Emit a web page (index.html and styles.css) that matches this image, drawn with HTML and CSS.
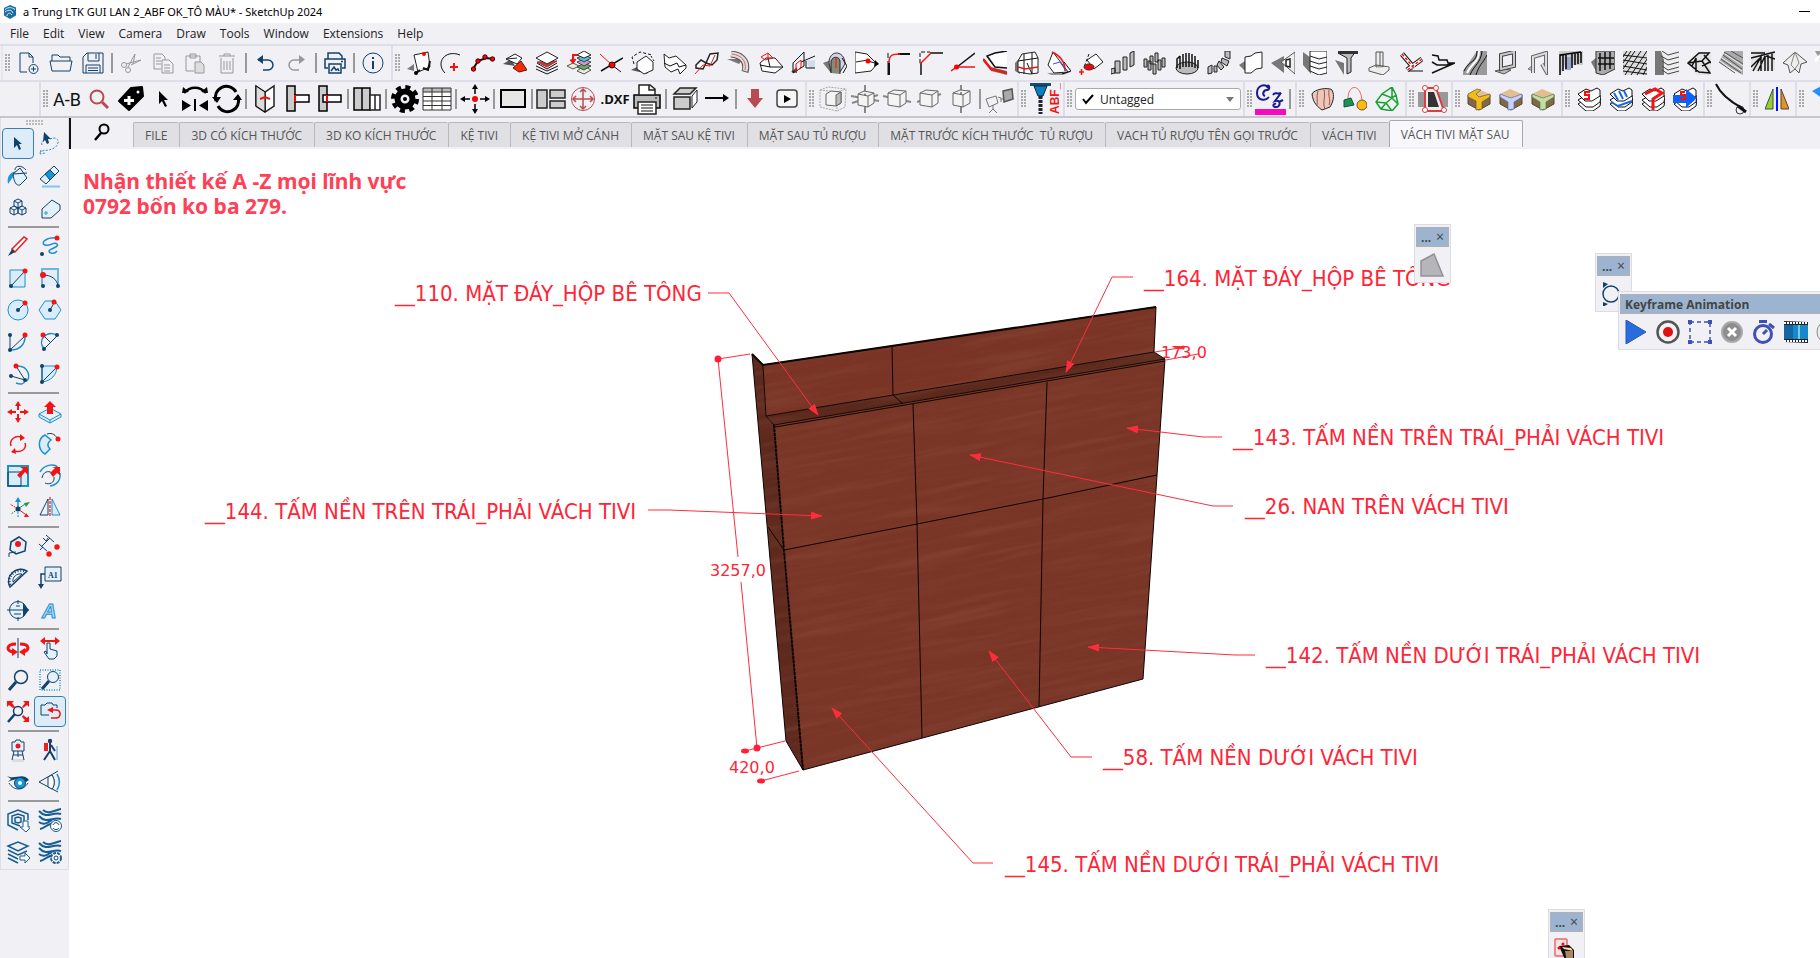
FILE: index.html
```html
<!DOCTYPE html>
<html lang="vi">
<head>
<meta charset="utf-8">
<title>a Trung LTK GUI LAN 2_ABF OK_TÔ MÀU* - SketchUp 2024</title>
<link rel="stylesheet" href="styles.css">
</head>
<body>
<div class="app">
<header class="titlebar">
  <svg class="logo" viewBox="0 0 16 16"><path d="M8 1 14 3.500v8L8 15 2 11.500V4z" fill="#1b6ca0"/><path d="M3 5.500c4-3 7-2 10 0M3 8c4-3 7-2 8 1M5 12c0-3 3-4 5-1" fill="none" stroke="#d8ecf8"/></svg>
  <h1 class="title">a Trung LTK GUI LAN 2_ABF OK_TÔ MÀU* - SketchUp 2024</h1>
  <button class="minimize" aria-label="Minimize"></button>
</header>
<nav class="menubar">
  <button>File</button><button>Edit</button><button>View</button><button>Camera</button><button>Draw</button><button>Tools</button><button>Window</button><button>Extensions</button><button>Help</button>
</nav>

<div class="toolrow">
 <div class="bar first">
  <i class="grip"></i>
  <button class="tb" aria-label="New"><svg viewBox="0 0 24 24"><g class="n"><path d="M10 21H3V2h9l4 4v6M12 2v4h4"/><circle cx="16.500" cy="18" r="4.500"/><path d="M14 18h5M16.500 15.500v5"/></g></svg></button>
  <button class="tb" aria-label="Open"><svg viewBox="0 0 24 24"><g class="n"><path d="M3 10V4h6l2 2h10v4M1 10h22l-2 10H3z"/></g></svg></button>
  <button class="tb" aria-label="Save"><svg viewBox="0 0 24 24"><g class="n"><path d="M2 6 6 2h16v20H2zM7 2v8h11V2M15 3v5M5 22v-8h14v8M7 17h10M7 19.500h10"/></g></svg></button>
  <i class="sep"></i>
  <button class="tb" aria-label="Cut"><svg viewBox="0 0 24 24"><g class="g"><circle cx="5" cy="14" r="2.500"/><circle cx="9" cy="19" r="2.500"/><path d="M7 13 22 9l-10 5M9 16 16 3l-2 10"/></g></svg></button>
  <button class="tb" aria-label="Copy"><svg viewBox="0 0 24 24"><g class="g"><path d="M10 18H3V3h8l3 3v3M11 9h7l4 4v9H11zM5 7h5M5 10h5M5 13h5M13 14h6M13 17h6M13 20h6"/></g></svg></button>
  <button class="tb" aria-label="Paste"><svg viewBox="0 0 24 24"><g class="g"><path d="M11 20H3V5h14v6M7 7V3h6v4z"/><path d="M12 11h6l3 3v8h-9z" fill="#ddd"/></g></svg></button>
  <button class="tb" aria-label="Delete"><svg viewBox="0 0 24 24"><g class="g"><path d="M4 5h16M9 5V3h6v2M6 7v15h12V7M9 10v9M12 10v9M15 10v9"/></g></svg></button>
  <i class="sep"></i>
  <button class="tb" aria-label="Undo"><svg viewBox="0 0 24 24"><path d="M10 19h5a5 5 0 0 0 0-10H5" class="n" stroke-width="1.500"/><path d="M4 8.500 10 4v9z" fill="#12416b"/></svg></button>
  <button class="tb" aria-label="Redo"><svg viewBox="0 0 24 24"><path d="M14 19H9A5 5 0 0 1 9 9h9" class="g" stroke-width="1.500"/><path d="M20 8.500 14 4v9z" fill="#999"/></svg></button>
  <i class="sep"></i>
  <button class="tb" aria-label="Print"><svg viewBox="0 0 24 24"><g class="n" stroke-width="1.500"><path d="M5 8V2h11l3 3v3M5 17H2V8h20v9h-3M6 13h12v9H6z"/><path d="m8 20 3-4 2 3 2-1 1 2M18 10.500h2"/></g></svg></button>
  <i class="sep"></i>
  <button class="tb" aria-label="Model info"><svg viewBox="0 0 24 24"><circle class="n" cx="12" cy="12" r="10"/><path d="M12 6v2M12 10v8" stroke="#12416b" stroke-width="2"/></svg></button>
 </div>
 <div class="bar grow">
  <i class="grip"></i>
  <button class="tb" aria-label="Place on face"><svg viewBox="0 0 24 24"><path d="M0 18 7 13v7z" fill="#777"/><path class="kw" d="m7 4 14-3 2 15-12 5z" stroke="#999"/><path d="M9 22l4-3M16 17l5 2 2-9" class="k" stroke-width="2"/><circle cx="17" cy="3" r="2" fill="red"/><circle cx="9" cy="22" r="2"/></svg></button>
  <button class="tb" aria-label="Arc by centre"><svg viewBox="0 0 24 24"><path class="k" d="M6 22C-4 12 6-2 21 4"/><path class="r" d="M11 16h8M15 12v8" stroke-width="2"/></svg></button>
  <button class="tb" aria-label="Polyline"><svg viewBox="0 0 24 24"><path class="k" d="M2 18 7 10 15 7l8 1" stroke-width="2"/><g fill="red" stroke="#400"><circle cx="2.500" cy="18" r="2.200"/><circle cx="7" cy="10" r="2.200"/><circle cx="14" cy="6" r="2.200"/><circle cx="21.500" cy="8" r="2.200"/></g></svg></button>
  <button class="tb" aria-label="Fold faces"><svg viewBox="0 0 24 24"><path d="M0 13 8 8l4 7z" fill="#555"/><path class="kw" d="M3 8 12 3l7 4-5 6zM3 8l11-1"/><path d="m10 17 8-7 6 9-8 2z" fill="#f22c00" stroke="#611"/></svg></button>
  <button class="tb" aria-label="Red layer"><svg viewBox="0 0 24 24"><path class="k" d="m1 18 11 5 11-5M1 15l11 5 11-5M2 12l10 6 10-6"/><path d="M2 11 22 10 12 16z" fill="#d33" stroke="#933"/><path class="kw" d="m1 7 11-6 11 6-11 6z"/></svg></button>
  <button class="tb" aria-label="Swap layers"><svg viewBox="0 0 24 24"><path d="M10 20 17 23l7-4-7-4zM0 15l6-3 6 3-6 3z" fill="#eed" stroke="#555"/><path d="M10 16 17 19l7-4-7-3z" fill="#6a6" stroke="#444"/><path d="M10 11 17 15l7-4-7-3z" fill="#c9c" stroke="#444"/><path d="m10 7 7 4 7-4-7-3z" fill="#5bd" stroke="#444"/><path class="kw" d="m10 4 7-4 7 4-7 3z"/><path class="r" d="M10 4H6v7M3.500 8.500 6 11.500 8.500 8" stroke-width="2"/></svg></button>
  <button class="tb" aria-label="Trim lines"><svg viewBox="0 0 24 24"><path class="k" d="M2 20 24 7" stroke-width="1.500"/><path class="r" d="m1 3 12 11"/><path class="k" d="m13 14 9 7"/><circle cx="13" cy="14" r="3" fill="red" stroke="#300"/></svg></button>
  <button class="tb" aria-label="Polygon shadow"><svg viewBox="0 0 24 24"><path d="m0 19 8-4 9 8z" fill="#555"/><path class="k" d="M3 13 1 6 9 1l12 3" stroke-dasharray="3 2"/><path class="kw" d="m6 11 9-6 7 6v8l-9 4-7-5z"/><path class="k" d="m20 5 3 5" stroke-dasharray="2 2"/></svg></button>
  <button class="tb" aria-label="Extrude shape"><svg viewBox="0 0 24 24"><path class="kw" d="m1 3 5 4 7-2 10 9v3l-6 6-2-5-7 3-6-5z"/><path class="k" d="m1 12 6 3 7-3 2 4 7-2"/></svg></button>
  <button class="tb" aria-label="Extrude along path"><svg viewBox="0 0 24 24"><path class="kw" d="m1 14 5-5 5 3 4-9 8-1-1 7-5 5-6-2-3 6-7-1z" stroke-width="1.500"/><path class="r" d="M0 23 8 14l7 1L20 4"/></svg></button>
  <button class="tb" aria-label="Pipe"><svg viewBox="0 0 24 24"><path d="M0 8h16l-4 5z" fill="#777"/><path d="M4 3c11 1 17 8 14 18" fill="none" stroke="#555" stroke-width="7"/><path d="M4 3c11 1 17 8 14 17" fill="none" stroke="#ddd" stroke-width="5"/><path class="r" d="M5 3c9 1 15 7 13 16" opacity=".6"/></svg></button>
  <button class="tb" aria-label="Roof"><svg viewBox="0 0 24 24"><path class="kw" d="M1 12 7 7h9l8 9-8 6-13-2z"/><path class="k" d="m1 14 10 2 13 0M11 16 9 7"/><path class="r" d="m2 6 7-4 5 5-8 2zM9 2v5" /></svg></button>
  <button class="tb" aria-label="Project to plane"><svg viewBox="0 0 24 24"><path d="m0 21 6-5v6z" fill="#555"/><path d="m16 10 8-1v8l-6 1z" fill="#cde"/><path class="k" d="M2 22V12L13 1v14zM24 5 10 11M15 10v7h9"/><path class="r" d="m5 21 0-8 5-4v7z"/></svg></button>
  <button class="tb" aria-label="Wrap shape"><svg viewBox="0 0 24 24"><path d="m0 12 8-3v13z" fill="#777"/><path d="M6 12C6-2 22-1 22 13l-5 8H8z" fill="#cfd4e4" stroke="#333"/><path d="M8 22V10c2-5 8-5 9 0v13" fill="#887" stroke="#222"/><path class="r" d="M13 6v11"/><path class="k" d="m19 7 5 8-4 7"/></svg></button>
  <button class="tb" aria-label="Point on shape"><svg viewBox="0 0 24 24"><path class="kw" d="M0 1 12 3l10 10-6 7-16 2zM1 11 13 9"/><path class="k" d="m13 10 10 3"/><circle cx="13" cy="10" r="2.500" fill="red"/><path d="m20 9 4 4-5 3z"/></svg></button>
  <button class="tb" aria-label="Fillet"><svg viewBox="0 0 24 24"><path class="k" d="M1 24V2" stroke-dasharray="14 3"/><path class="k" d="M11 3h12M2 24V12" stroke-width="2"/><path class="r" d="M2 12C2 4 5 3 13 3" stroke-width="1.500"/></svg></button>
  <button class="tb" aria-label="Chamfer"><svg viewBox="0 0 24 24"><path class="k" d="M1 12V1h10" stroke-dasharray="4 2"/><path class="k" d="M11 2h13M2 24V12" stroke-width="1.500"/><path class="r" d="M1 13 12 2" stroke-width="1.500"/></svg></button>
  <button class="tb" aria-label="Angle"><svg viewBox="0 0 24 24"><path class="k" d="M6 16 24 2" stroke-width="1.500"/><path class="r" d="m0 20 6-4h18" stroke-width="1.500"/><circle cx="5.500" cy="16" r="2.500" fill="red"/></svg></button>
  <button class="tb" aria-label="Surface edge"><svg viewBox="0 0 24 24"><path d="m6 4 18-4v16L11 15z" fill="#fff"/><path d="m0 7 8 9 16 4v4L8 20z" fill="#777"/><path class="k" d="M24 0 12 2 4 5l8 11 12 1" stroke-width="1.500"/><path class="r" d="m0 8 8 10 16 4" stroke-width="2.500"/></svg></button>
  <button class="tb" aria-label="Cylinder cut"><svg viewBox="0 0 24 24"><path d="M0 12 5 7v16l-5-3z" fill="#777"/><path class="kw" d="m3 10 4-7 13-2 3 6v15l-8 1-12-2z"/><path class="k" d="M3 10 23 7M9 3v20M17 2v21l-5-11"/><path class="r" d="m3 16 7 2 13-2" stroke-width="1.500"/></svg></button>
  <button class="tb" aria-label="Curved surface"><svg viewBox="0 0 24 24"><path d="m0 22 24-1-8 3H4z" fill="#999"/><path class="kw" d="M6 1 1 14l6 8 14-1z" stroke="#777"/><path class="r" d="M5 1c9 4 13 10 13 19" stroke-width="1.500"/><path class="k" d="m17 11 7 9-9 3"/><path d="m6 13 7-2 6 9" fill="none" stroke="#44f"/></svg></button>
  <button class="tb" aria-label="Face finder"><svg viewBox="0 0 24 24"><path class="kw" d="m8 9 9-6 7 8-9 7z"/><path class="k" d="m10 3-5 13" stroke-dasharray="3 2"/><ellipse cx="10" cy="16" rx="5" ry="3" fill="red" stroke="#333"/><path class="r" d="M0 21h5M2.500 18v6" stroke-width="1.500"/></svg></button>
  <button class="tb" aria-label="Posts"><svg viewBox="0 0 24 24"><g class="kg"><path d="M0 23v-5l4-1v5zM4 10h5v12H4zM12 6h4v13h-4zM19 2l4-2v14l-4 2z"/></g></svg></button>
  <button class="tb" aria-label="Post grid"><svg viewBox="0 0 24 24"><g class="kg"><path d="M1 8h3v8H1zM7 5h3v8H7zM12 2h3v9h-3zM19 7h3v9h-3zM5 10h3v9H5zM10 13h3v10h-3zM15 9h3v10h-3z"/></g></svg></button>
  <button class="tb" aria-label="Post ring"><svg viewBox="0 0 24 24"><ellipse cx="12" cy="17" rx="11" ry="6" class="kg"/><path class="k" d="M2 17V8l3-3M5 18V5M8 16V3M11 16V2M14 16V2M17 16V3M20 17V5M23 17V9" stroke-width="1.500"/></svg></button>
  <button class="tb" aria-label="Posts on curve"><svg viewBox="0 0 24 24"><g class="kg"><path d="m1 16 4-2v8l-4 1zM7 15h3v6H7zM12 10l5 6-3 3-4-5zM15 7l7 3-2 5-6-4zM18 0h5v8l-5-2z"/></g></svg></button>
  <button class="tb" aria-label="Bent sheet"><svg viewBox="0 0 24 24"><path d="m0 14 6-4v10z" fill="#777"/><path class="kw" d="m6 6 6-1 4-3 7-1v16l-6 1-5 4H6z" stroke="#444"/></svg></button>
  <button class="tb" aria-label="Flared opening"><svg viewBox="0 0 24 24"><path d="m0 12 13-7v17z" fill="#777"/><path d="M10 11 24 1v22z" fill="#eee" stroke="#555"/><path d="m12 11 10-7v16z" fill="#eee"/><path class="kw" d="m15 9 4-1v8l-4-1z" stroke-width="1.500"/></svg></button>
  <button class="tb" aria-label="Louvers"><svg viewBox="0 0 24 24"><path d="m0 1 8 6v16L0 14z" fill="#777"/><path class="kw" d="M7 0h17v22l-8 2-9-4zM7 5l9 3 8-2M7 10l9 3 8-2M7 15l9 3 8-2"/></svg></button>
  <button class="tb" aria-label="Funnel"><svg viewBox="0 0 24 24"><path d="m0 9 9 3v12z" fill="#777"/><path class="kg" d="m3 2 18-2-5 7v14l-4 2V7z"/><path d="M3 0h20v3H3z" fill="#333"/></svg></button>
  <button class="tb" aria-label="Column base"><svg viewBox="0 0 24 24"><g fill="#eee" stroke="#555"><path d="M9 1h7v15H9zM2 17l7-3 13 2-5 6z"/><path d="M13 1v14M2 17v3l14 4 6-5v-3"/></g></svg></button>
  <button class="tb" aria-label="Crossed beams"><svg viewBox="0 0 24 24"><path class="k" d="M10 20h14" stroke="#888"/><path d="m3 3 12 14M23 8 8 19" stroke="#111" stroke-width="5"/><path d="m3 3 12 14M23 8 8 19" stroke="#fff" stroke-width="3"/><path class="r" d="m3 3 12 14M23 8 7 20" stroke-dasharray="3 2" stroke-width="1.500"/></svg></button>
  <button class="tb" aria-label="Stair line"><svg viewBox="0 0 24 24"><path class="k" d="m1 4 6 1 1 4h8l1 3h7L1 22M1 11l5 3h10l8-2" stroke-width="1.500"/></svg></button>
  <button class="tb" aria-label="Escalator"><svg viewBox="0 0 24 24"><path d="M14 0h10v24H0v-4z" fill="#999"/><path class="k" d="M14 0c0 12-8 9-13 20M19 0c-1 12-8 14-12 24M24 4c-4 8-8 10-11 20"/><path d="M16 0c0 12-7 11-12 22" stroke="#fff" fill="none" stroke-width="2"/></svg></button>
  <button class="tb" aria-label="Frame"><svg viewBox="0 0 24 24"><path d="m0 20 8-2 8 1-7 4z" fill="#bbb" stroke="#555"/><path d="M6 4 19 1v14L6 18z" fill="none" stroke="#444" stroke-width="4"/><path d="M6 4 19 1v14L6 18z" fill="none" stroke="#ccc" stroke-width="2"/></svg></button>
  <button class="tb" aria-label="Arch frame"><svg viewBox="0 0 24 24"><path d="m1 18 5-4v6z" fill="#bbb" stroke="#777"/><path d="M6 22V6l13-4v18l-4-7" fill="none" stroke="#666" stroke-width="4"/><path d="M6 22V6l13-4v18l-4-7" fill="none" stroke="#ddd" stroke-width="2"/></svg></button>
  <button class="tb" aria-label="Curtain wall"><svg viewBox="0 0 24 24"><path d="M0 0h24v14H6L1 24z" fill="#ccc"/><path d="M6 6h6v13H6z" fill="#99a6c8"/><path d="M1 24V4h3v16M7 18V4M13 17V3M16 14V2M19 13V2M22 12V1M1 4l21-3" stroke="#000" stroke-width="1.500" fill="none"/></svg></button>
  <button class="tb" aria-label="Lattice window"><svg viewBox="0 0 24 24"><path d="m0 11 6-5v16z" fill="#777"/><path d="M5 0h19v18l-12 6-7-2z" fill="#aaa" stroke="#333"/><path class="k" d="m9 2v18M14 1v18M19 1v17M7 7h16M7 13h16" stroke-width="1.500"/></svg></button>
  <button class="tb" aria-label="Weave"><svg viewBox="0 0 24 24"><path d="M0 0h24v24H0z" fill="#ddd"/><path class="k" d="m0 6 4-6M0 12l8-12M0 18 12 0M2 24 18 0M8 24 24 0M14 24 24 8M20 24l4-8M0 4l24 3M0 9l24 4M0 15l24 4M0 20l24 3"/></svg></button>
  <button class="tb" aria-label="Siding"><svg viewBox="0 0 24 24"><path d="M0 0h24v24H0z" fill="#eee"/><path d="M0 0h6l3 9v15H0z" fill="#777"/><path fill="none" d="m7 0 6 4 11-3M6 5l7 4 11-3M7 10l6 4 11-3M7 15l6 4 11-3M7 19l6 4 11-3" stroke="#444"/></svg></button>
  <button class="tb" aria-label="Lattice sphere"><svg viewBox="0 0 24 24"><path d="M0 12 12 1h12v23H10z" fill="#e4e4e4"/><path class="k" d="M1 12 12 2l10 0-7 8 8 12-11-1zM1 12l14-2M5 15l4-8v14M17 4l7 8M15 15l8-4" stroke-width="1.500"/></svg></button>
  <button class="tb" aria-label="Corrugated sheet"><svg viewBox="0 0 24 24"><path d="M6 0h18v24L0 11z" fill="#aaa"/><path fill="none" d="M5 1 24 13M4 4l19 14M2 8l20 14M0 11l16 11M12 0l12 7" stroke="#555"/><path d="m6 3 18 12M3 7l20 13M1 10l17 12" stroke="#eee"/></svg></button>
  <button class="tb" aria-label="Rafters"><svg viewBox="0 0 24 24"><path d="M0 0h24v20H0z" fill="#e4e4e4"/><path class="k" d="M0 7 24 1M0 2l14 0M2 20l8-14 0 14M7 20 14 5v15M17 4v16M21 2v18M0 16l9-9M24 8l-9-3" stroke-width="1.500"/></svg></button>
  <button class="tb" aria-label="Roof block"><svg viewBox="0 0 24 24"><path d="m0 12 12-11 12 10-6 2-2 9-4-4-5 4-2-8z" fill="#eee" stroke="#555"/><path d="M12 1 8 14l4 4 4-6z" fill="none" stroke="#888"/></svg></button>
  <button class="tb" aria-label="More shapes"><svg viewBox="0 0 24 24"><path d="M0 0h24v14H8z" fill="#999"/><path d="m0 10 8-8" stroke="#fff" stroke-width="3"/></svg></button>
 </div>
</div>

<div class="toolrow second">
 <div class="bar">
  <i class="grip"></i>
  <button class="tb word">A-B</button>
  <button class="tb" aria-label="Search"><svg class="big" viewBox="0 0 28 28"><g fill="none" stroke="#b94b50" stroke-width="2"><circle cx="12" cy="12" r="6.500"/><path d="m17 17 6 6" stroke-width="3"/></g></svg></button>
  <button class="tb" aria-label="Add tag"><svg class="big" viewBox="0 0 28 28"><path d="m14 3 11-1 1 9-14 14L2 16z" fill="#000" stroke="#000" stroke-linejoin="round" stroke-width="2"/><path d="M12 11v9M7 15.500h10" stroke="#fff" stroke-width="3"/><circle cx="21" cy="7" r="1.500" fill="#fff"/></svg></button>
  <button class="tb" aria-label="Pointer"><svg class="big" viewBox="0 0 28 28"><path d="m10 6 9 9h-4l3 6-2 1-3-6-3 3z"/></svg></button>
  <button class="tb" aria-label="Mirror"><svg class="big" viewBox="0 0 28 28"><path d="M3 8c6-7 16-7 22 0" fill="none" stroke="#000" stroke-width="2.500"/><path d="m1 8 1-6 6 5zM27 8l-1-6-6 5zM1 15v11l9-5.500zM27 15v11l-9-5.500z"/><path d="M14 14v12" stroke="#000" stroke-width="2"/></svg></button>
  <button class="tb" aria-label="Rotate"><svg class="big" viewBox="0 0 28 28"><g fill="none" stroke="#000" stroke-width="3"><path d="M3 16A11 11 0 0 1 23 7"/><path d="M25 12A11 11 0 0 1 5 21"/></g><path d="m-1 12 9 0-4 6zM20 15l9 0-4-6z"/></svg></button>
  <i class="sep"></i>
  <button class="tb" aria-label="Fold"><svg class="big" viewBox="0 0 28 28"><path class="kw" d="m5 1 9 6 9-6v20l-9 6-9-6zM14 7v20" stroke-width="1.500"/><path d="m5 1 9 6v20l-9-6z" fill="#ddd" stroke="#000"/><path class="r" d="m9 14 5-2 5 2" stroke-width="2"/></svg></button>
  <button class="tb" aria-label="Joint right"><svg class="big" viewBox="0 0 28 28"><path d="M4 1h8v25H4z" fill="#ccc" stroke="#000" stroke-width="1.500"/><path d="M12 10h14v7H12z" fill="#fff" stroke="#000" stroke-width="1.500"/><path d="M12 10v7" stroke="red" stroke-width="2"/></svg></button>
  <button class="tb" aria-label="Joint inset"><svg class="big" viewBox="0 0 28 28"><path d="M4 1h8v25H4z" fill="#ccc" stroke="#000" stroke-width="1.500"/><path d="M8 10h18v7H8z" fill="#fff" stroke="#000" stroke-width="1.500"/><path d="M12 10v7" stroke="red" stroke-width="2"/></svg></button>
  <i class="sep"></i>
  <button class="tb" aria-label="Panels"><svg class="big" viewBox="0 0 28 28"><path d="M1 3h8v22H1zM9 3h8v22H9z" fill="#ccc" stroke="#000" stroke-width="1.500"/><path class="kw" d="M17 10h5v15h-5zM22 10h5v15h-5z" stroke-width="1.500"/></svg></button>
  <i class="sep"></i>
  <button class="tb" aria-label="Settings"><svg class="big" viewBox="0 0 28 28"><circle cx="14" cy="14" r="12" fill="none" stroke="#000" stroke-width="4" stroke-dasharray="5 4.425"/><circle cx="14" cy="14" r="7.500" fill="none" stroke="#000" stroke-width="6"/><circle cx="14" cy="14" r="2"/></svg></button>
  <button class="tb" aria-label="Table"><svg class="big wide" viewBox="0 0 30 28"><path d="M1 3h28v22H1z" fill="#fff"/><path d="M1 3h28v4H1z" fill="#bbb"/><path d="M1 3h28v22H1zM1 7h28M1 11.500h28M1 16h28M1 20.500h28M10 3v22M20 3v22" fill="none" stroke="#333"/></svg></button>
  <i class="sep"></i>
  <button class="tb" aria-label="Move"><svg class="big" viewBox="0 0 28 28"><path d="M14 1v8M14 19v8M1 14h8M19 14h8" stroke="#000" stroke-width="1.500"/><path d="m14-1 3 5h-6zM14 29l3-5h-6zM-1 14l5-3v6zM29 14l-5-3v6z"/><circle cx="14" cy="14" r="3" fill="red"/></svg></button>
  <i class="sep"></i>
  <button class="tb" aria-label="Rectangle"><svg class="big" viewBox="0 0 28 28"><path d="M2 5h24v17H2z" fill="#e6e6e6" stroke="#000" stroke-width="2"/></svg></button>
  <i class="sep"></i>
  <button class="tb" aria-label="Layout"><svg class="big wide" viewBox="0 0 30 28"><path d="M1 5h10v18H1zM14 5h15v8H14zM14 16h15v7H14z" fill="#ccc" stroke="#222" stroke-width="1.500"/></svg></button>
  <button class="tb" aria-label="Centre move"><svg class="big" viewBox="0 0 28 28"><g fill="none" stroke="#b94b50"><circle cx="14" cy="14" r="11.500"/><path d="M14 5v18M5 14h18M11 7l3-3 3 3M11 21l3 3 3-3M7 11l-3 3 3 3M21 11l3 3-3 3" stroke-width="1.500"/></g></svg></button>
  <button class="tb word dxf">.DXF</button>
  <button class="tb" aria-label="Plot"><svg class="big" viewBox="0 0 28 28"><path d="M1 10h26v13H1z" fill="#bbb" stroke="#000" stroke-width="1.500"/><path class="kw" d="M6 10V0h11l5 4v6zM16 0v5h6M5 17h18v12H5z" stroke-width="1.500"/><path class="k" d="M8 20h12M8 23h12M8 26h12M22 13h2"/></svg></button>
  <i class="sep"></i>
  <button class="tb" aria-label="Box"><svg class="big" viewBox="0 0 28 28"><path d="M3 12h16v12H3z" fill="#ccc" stroke="#222" stroke-width="1.500"/><path d="m3 9 6-6h16l-6 6z" fill="#ccc" stroke="#222" stroke-width="1.500"/><path d="m21 11 5-6v12l-5 6z" fill="#fff" stroke="#222"/></svg></button>
  <button class="tb" aria-label="Arrow"><svg class="big" viewBox="0 0 28 28"><path d="M2 13h20" stroke="#000" stroke-width="2"/><path d="m26 13-6-4v8z"/></svg></button>
  <i class="sep"></i>
  <button class="tb" aria-label="Export down"><svg class="big" viewBox="0 0 28 28"><path d="M10 4h8v9h4l-8 10-8-10h4z" fill="#b94b50"/></svg></button>
  <button class="tb" aria-label="Play"><svg class="big" viewBox="0 0 28 28"><rect x="4" y="5" width="20" height="17" rx="3" fill="#f6f6f6" stroke="#444" stroke-width="1.500"/><path d="m11 10 7 4-7 4z"/></svg></button>
 </div>
 <div class="bar">
  <i class="grip"></i>
  <button class="tb" aria-label="Scale box"><svg class="big" viewBox="0 0 28 28"><path class="c" d="m1 5 8-3 18 2-1 18-8 4L1 22zM1 5l17 2 9-3M18 7v19" stroke="#aaa" stroke-dasharray="2 1"/><path d="m7 9 5-3 10 1v11l-5 3-10-1z" class="cb"/><path d="m17 10 5-3v11l-5 3z" fill="#bbb" stroke="#666"/></svg></button>
  <button class="tb" aria-label="Centre all"><svg class="big" viewBox="0 0 28 28"><path d="M14 0v28M0 11l28 5M1 18l26-8" stroke="#888" stroke-width="2"/><path class="cb" d="m7 9 6-3 10 2v10l-6 4-10-2zM7 9l10 2 6-3M17 11v11"/></svg></button>
  <button class="tb" aria-label="Centre X"><svg class="big" viewBox="0 0 28 28"><path d="m0 11 28 6" stroke="#888" stroke-width="2"/><path class="cb" d="m5 8 6-3 12 1v12l-6 4-12-2zM5 8l12 2 6-4M17 10v12"/></svg></button>
  <button class="tb" aria-label="Centre Y"><svg class="big" viewBox="0 0 28 28"><path d="m2 17 24-8" stroke="#888" stroke-width="2"/><path class="cb" d="m5 8 6-3 12 1v12l-6 4-12-2zM5 8l12 2 6-4M17 10v12"/></svg></button>
  <button class="tb" aria-label="Centre Z"><svg class="big" viewBox="0 0 28 28"><path d="M14 0v28" stroke="#888" stroke-width="2"/><path class="cb" d="m6 8 7-3 10 1v12l-7 4-10-2zM6 8l10 2 7-4M16 10v12"/></svg></button>
  <i class="sep"></i>
  <button class="tb" aria-label="Camera box"><svg class="big wide" viewBox="0 0 30 28"><path class="c" d="m2 14 10-3 2 7-9 4zM9 20v4l-4 4M9 24l4 4M14 12l3 1v4M17 14h6" stroke="#777"/><path d="m19 6 9-2 1 10-9 3z" fill="#aaa" stroke="#555" stroke-width="1.500"/></svg></button>
 </div>
 <div class="bar">
  <i class="grip"></i>
  <button class="tb" aria-label="ABF"><svg class="abf" viewBox="0 0 32 32"><path d="M1 0h21v3H1z" fill="#164e70"/><path d="M5 3h13l-4 10H9z" fill="#0880bd" stroke="#124" /><path d="M11.500 13v18" stroke="#223" stroke-width="4" stroke-dasharray="3 1"/><text x="-31" y="30" transform="rotate(-90)">ABF_</text></svg></button>
 </div>
 <div class="bar">
  <i class="grip"></i>
  <label class="tagbox"><svg class="check" viewBox="0 0 12 12"><path d="m1 6 3 4 7-8" fill="none" stroke="#000" stroke-width="2"/></svg><select aria-label="Tag"><option>Untagged</option></select><svg class="caret" viewBox="0 0 8 5"><path d="M0 0h8L4 5z" fill="#777"/></svg></label>
 </div>
 <div class="bar">
  <i class="grip"></i>
  <button class="tb" aria-label="Curviz"><svg class="abf" viewBox="0 0 32 32"><path d="M0 26h31v6H0z" fill="#f808c0"/><path d="M13 5c-2-5-11-3-11 5 0 7 8 9 12 4M12 3c3-2 3 4 0 4-4 0-5 5-2 6" fill="none" stroke="#1a1a90" stroke-width="2"/><path d="M18 12c2-4 4 0 8-2l-6 8c6-2 6 6 1 6-4 0-3-4 0-3M24 19l4-2" fill="none" stroke="#1a1a90" stroke-width="2"/></svg></button>
  <i class="sep"></i>
 </div>
 <div class="bar">
  <i class="grip"></i>
  <button class="tb" aria-label="Shell"><svg viewBox="0 0 24 24"><path d="M1 7C3 2 18 0 21 3c3 6 1 12-2 17l-8 3C4 18 2 14 1 7z" fill="#eec7bb" stroke="#222"/><path d="M7 4c-2 6 0 9-1 14M13 3c2 7-2 12 1 19M18 3c-1 8 2 9 0 15" fill="none" stroke="#954"/></svg></button>
  <button class="tb" aria-label="Connect"><svg viewBox="0 0 24 24"><path d="M5 12C5-4 19-4 19 16" fill="none" stroke="#e66" /><path d="m1 13 7-2 3 7-10 2z" fill="#1d9150" stroke="#154"/><circle cx="19" cy="18" r="5" fill="#fb1" stroke="#752"/></svg></button>
  <button class="tb" aria-label="Green mesh"><svg viewBox="0 0 24 24"><path d="M17 0 7 7l-6 8 5 7 11 2 6-7-2-9zM7 7l10 4 4-3M17 11l-6 5-10-1M11 16l-5 6M11 16l6 8 6-7-6-6M17 0v11" fill="none" stroke="#18a030" stroke-width="1.500"/></svg></button>
 </div>
 <div class="bar">
  <i class="grip"></i>
  <button class="tb" aria-label="Taper"><svg class="big wide" viewBox="0 0 30 28"><path d="M0 7h30v15H0z" fill="#999"/><path d="M7 3h11l8 23H7z" fill="#eee"/><path d="M10 7h6l5 15H10z" fill="#333"/><path d="M7 3h11l8 23H7z" fill="none" stroke="#d84040" stroke-width="2"/><g fill="#fff" stroke="#d84040"><circle cx="7" cy="3" r="2.500"/><circle cx="18" cy="3" r="2.500"/><circle cx="26" cy="25" r="2.500"/><circle cx="7" cy="25" r="2.500"/></g></svg></button>
 </div>
 <div class="bar">
  <i class="grip"></i>
  <button class="tb" aria-label="Round corner"><svg viewBox="0 0 24 24"><path d="m1 8 11 6v9L1 17zM23 8l-11 6v9l11-6z" fill="#806a46" stroke="#543"/><path d="m1 7 10-5 12 5-11 6z" fill="#e2be92"/><path d="M1 10V7l9-5 4 1-5 4 3 3 11-3v3l-8 5v7l-6 1v-9z" fill="#f5bb16" stroke="#654" stroke-width=".7"/></svg></button>
  <button class="tb" aria-label="Sharp corner"><svg viewBox="0 0 24 24"><path d="m1 8 11 6v9L1 17zM23 8l-11 6v9l11-6z" fill="#806a46" stroke="#543"/><path d="m1 7 10-5 12 5-11 6z" fill="#e2be92"/><path d="M1 10V7l11 4 11-4v3l-8 5v7l-6 1v-8z" fill="#c5d4ff" stroke="#669" stroke-width=".7"/></svg></button>
  <button class="tb" aria-label="Bevel corner"><svg viewBox="0 0 24 24"><path d="m1 8 11 6v9L1 17zM23 8l-11 6v9l11-6z" fill="#806a46" stroke="#543"/><path d="m1 7 10-5 12 5-11 6z" fill="#e2be92"/><path d="M1 10V7l11 4 11-4v3l-8 5v7l-6 1v-8z" fill="#c4dda0" stroke="#575" stroke-width=".7"/></svg></button>
 </div>
 <div class="bar">
  <i class="grip"></i>
  <button class="tb" aria-label="Layers S"><svg viewBox="0 0 24 24"><g class="ly"><path d="m1 17 5-3 18-1-1 6-7 5H9z"/><path d="m1 13 5-3 18-1-1 6-7 5H9z"/><path d="m1 7 8-5 5 2 6-3 3 2v6l-8 5H8z"/></g><path class="r" d="M13 5H8v3h4v4H7" stroke-width="2"/></svg></button>
  <button class="tb" aria-label="Blue layers"><svg viewBox="0 0 24 24"><g class="ly"><path d="m1 17 5-3 18-1-1 6-7 5H9z"/><path d="m1 13 5-3 18-1-1 6-7 5H9z"/><path d="m1 7 8-5 5 2 6-3 3 2v6l-8 5H8z"/></g><path d="m5 6 4 7M10 4l4 8M15 4l3 6M2 15l7 4 14-5" stroke="#1667ef" stroke-width="2" fill="none"/></svg></button>
  <button class="tb" aria-label="Red layers"><svg viewBox="0 0 24 24"><g class="ly"><path d="m1 17 5-3 18-1-1 6-7 5H9z"/><path d="m1 13 5-3 18-1-1 6-7 5H9z"/><path d="m1 7 8-5 5 2 6-3 3 2v6l-8 5H8z"/></g><path class="r" d="m4 7 10-5 7 4-9 6v11" stroke-width="3"/></svg></button>
  <button class="tb" aria-label="Export layers"><svg viewBox="0 0 24 24"><g class="ly"><path d="m1 17 5-3 18-1-1 6-7 5H9z"/><path d="m1 13 5-3 18-1-1 6-7 5H9z"/><path d="m1 7 8-5 5 2 6-3 3 2v6l-8 5H8z"/></g><path d="M0 8h13V2l11 9-11 10v-5H0z" fill="#0a62fa"/><path class="r" d="M12 5H8v3h4v4H7" stroke-width="2"/></svg></button>
 </div>
 <div class="bar">
  <i class="grip"></i>
  <button class="tb" aria-label="Sword"><svg class="abf" viewBox="0 0 32 32"><path d="M1 1c5 11 15 18 26 24" fill="none" stroke="#111" stroke-width="2"/><circle cx="25" cy="27" r="4" fill="none" stroke="#333"/><path d="m23 23 8 6" stroke="#111" stroke-width="3"/></svg></button>
 </div>
 <div class="bar">
  <i class="grip"></i>
  <button class="tb" aria-label="Flip"><svg viewBox="0 0 24 24"><path d="M8 2v20H0z" fill="#9c3" stroke="#354"/><path d="M16 2v20h8z" fill="#e6902a" stroke="#543"/><path d="M12 0v24" stroke="#01f" stroke-width="2"/></svg></button>
 </div>
 <div class="bar">
  <i class="grip"></i>
  <button class="tb" aria-label="Back"><svg class="big" viewBox="0 0 28 28"><path d="M3 6 14 0v14z" fill="#2391f5"/></svg></button>
 </div>
</div>

<div class="work">
<aside class="side">
 <div class="palette">
  <i class="hgrip"></i>
  <div class="grid">
   <button class="tb on" aria-label="Select"><svg viewBox="0 0 24 24"><path d="m8 5 8 7h-3l2 5-2 1-2-5-3 3z" fill="#12416b"/></svg></button>
   <button class="tb" aria-label="Lasso"><svg viewBox="0 0 24 24"><path class="b" d="M12 7c10-4 10 6 4 9-7 4-13 1-14 5M3 18l-1 4 5-1M4 13c-1-3 0-4 2-5" stroke-dasharray="2 1.500"/><path d="m6 0 7 7h-3l1 4-2 1-2-4-2 2z" fill="#12416b"/></svg></button>
   <button class="tb" aria-label="Paint"><svg viewBox="0 0 24 24"><path d="M2 20c-2-9 4-13 10-13L7 13z" fill="#2196d6"/><g class="n"><path class="f" d="m7 10 7-6 7 10-7 7c-4 1-6-3-7-11z"/><path d="M7 10 21 9M9 6c0-5 7-5 11 0"/></g></svg></button>
   <button class="tb" aria-label="Eraser"><svg viewBox="0 0 24 24"><path class="nf" d="M2 15 16 2l5 5L8 20z"/><path d="m7 10 5-4 5 5-5 5z" fill="#1598da" stroke="#12416b"/><path d="M4 22.500h18" stroke="#7cc7ee" stroke-width="2"/></svg></button>
   <button class="tb" aria-label="Components"><svg viewBox="0 0 24 24"><g class="nf"><path d="m8 5 4-2 4 2v5l-4 2-4-2zM8 5l4 2 4-2M12 7v5M4 12l4-2 4 2v5l-4 2-4-2zM4 12l4 2 4-2M8 14v5M12 12l4-2 4 2v5l-4 2-4-2zM12 12l4 2 4-2M16 14v5"/></g></svg></button>
   <button class="tb" aria-label="Tag"><svg viewBox="0 0 24 24"><path class="nf" d="m4 13 10-9 8 5v5l-9 8H4z"/><circle class="b" cx="8" cy="17" r="1.200"/></svg></button>
  </div>
  <i class="hsep"></i>
  <div class="grid">
   <button class="tb" aria-label="Line"><svg viewBox="0 0 24 24"><path d="m6 15 12-12 3 2L9 18z" fill="#fff" stroke="#f01818" stroke-width="1.500"/><path d="m2 22 4-7 3 3z" fill="#12416b"/></svg></button>
   <button class="tb" aria-label="Freehand"><svg viewBox="0 0 24 24"><path class="b" d="M19 4C8 3 2 9 7 11s9-4 12-1-8 5-8 7 5 4 8 0" stroke-width="1.500"/><circle class="rd" cx="19" cy="4" r="2.500"/><circle class="nd" cx="4" cy="20" r="2"/></svg></button>
   <button class="tb" aria-label="Rectangle tool"><svg viewBox="0 0 24 24"><path class="bf" d="M4 4h15v17H4z"/><path class="n" d="M5 20 18 6"/><circle class="rd" cx="19" cy="5" r="2.500"/><circle class="nd" cx="5" cy="20" r="2"/></svg></button>
   <button class="tb" aria-label="Rotated rectangle"><svg viewBox="0 0 24 24"><path d="M4 20V3h16v17" class="bf" stroke-width="2" opacity=".6"/><path class="n" d="M5 9c8 0 14 4 15 11"/><circle class="rd" cx="5" cy="9" r="3"/><circle class="nd" cx="5" cy="20" r="2"/><circle class="nd" cx="20" cy="20" r="2"/></svg></button>
   <button class="tb" aria-label="Circle"><svg viewBox="0 0 24 24"><circle class="bf" cx="12" cy="12" r="10"/><path class="n" d="m12 12 6-6"/><circle class="rd" cx="19" cy="5" r="2.500"/><circle class="nd" cx="12" cy="12" r="2"/></svg></button>
   <button class="tb" aria-label="Polygon"><svg viewBox="0 0 24 24"><path class="bf" d="M1 12 7 3h10l6 9-6 9H7z"/><path class="n" d="m12 12 4-7"/><circle class="rd" cx="16" cy="4" r="2.500"/><circle class="nd" cx="12" cy="12" r="2"/></svg></button>
   <button class="tb" aria-label="Arc"><svg viewBox="0 0 24 24"><path class="n" d="M4 5v15L19 6"/><path class="b" d="M19 7c0 7-5 13-14 13" stroke-width="1.500"/><circle class="rd" cx="19" cy="5" r="2.500"/><circle class="nd" cx="4" cy="5" r="2"/><circle class="nd" cx="4" cy="20" r="2"/></svg></button>
   <button class="tb" aria-label="Two point arc"><svg viewBox="0 0 24 24"><path class="b" d="M6 19C-1 10 8 0 19 5" stroke-width="1.500"/><path class="n" d="M6 19 19 6M7 7l6 6"/><circle class="rd" cx="5" cy="5" r="2.500"/><circle class="nd" cx="19" cy="5" r="2"/><circle class="nd" cx="6" cy="19" r="2"/></svg></button>
   <button class="tb" aria-label="Three point arc"><svg viewBox="0 0 24 24"><path class="b" d="M10 4c14-1 15 14 10 15M10 21c5 2 8 1 9-2" stroke-width="1.500"/><path class="n" d="m10 4 9 14-14-4"/><circle class="rd" cx="10" cy="4" r="2.500"/><circle class="nd" cx="5" cy="14" r="2"/><circle class="nd" cx="19" cy="18" r="2"/></svg></button>
   <button class="tb" aria-label="Pie"><svg viewBox="0 0 24 24"><path class="bf" d="M4 4h15c0 9-6 15-15 16z"/><path class="n" d="M4 4v16L19 5"/><circle class="rd" cx="19" cy="5" r="2.500"/><circle class="nd" cx="4" cy="4" r="2"/><circle class="nd" cx="4" cy="20" r="2"/></svg></button>
  </div>
  <i class="hsep"></i>
  <div class="grid">
   <button class="tb" aria-label="Move tool"><svg viewBox="0 0 24 24"><path fill="#f01414" d="m12 1 3 5h-2v4h-2V6H9zM12 23l3-5h-2v-4h-2v4H9zM1 12l5-3v2h4v2H6v2zM23 12l-5-3v2h-4v2h4v2z"/></svg></button>
   <button class="tb" aria-label="Push pull"><svg viewBox="0 0 24 24"><path class="bf" d="m1 14 11-6 11 6v3l-11 6-11-6zM1 14l11 6 11-6M12 20v3"/><path fill="#f01414" d="m12 1 6 6h-3v7H9V7H6z"/></svg></button>
   <button class="tb" aria-label="Rotate tool"><svg viewBox="0 0 24 24"><g fill="none" stroke="#e62020" stroke-width="1.500"><path d="M5 14c-2-6 4-11 10-9M19 11c2 6-4 10-10 8"/></g><path d="m14 2 5 4-5 3zM9 16l-4 4 5 2z" fill="#f01414"/></svg></button>
   <button class="tb" aria-label="Follow me"><svg viewBox="0 0 24 24"><path class="bf" d="M7 3c-8 4-7 15 0 19l5-5c-3-3-3-6 1-9z" stroke-width="1.500"/><path class="n" d="M9 2c6-2 9 2 10 4"/><circle class="rd" cx="20" cy="7" r="2.500"/></svg></button>
   <button class="tb" aria-label="Scale"><svg viewBox="0 0 24 24"><path class="bf" d="M2 2h20v20H2z" stroke-width="2"/><path class="n" d="M2 8h13v14H2z"/><path fill="#f01414" d="m11 11 6-6-3-2h8v8l-3-3-5 6z"/></svg></button>
   <button class="tb" aria-label="Offset"><svg viewBox="0 0 24 24"><path class="b" d="M2 8C7-1 18 0 20 4M22 9c1 7-3 12-10 13" stroke-width="1.500"/><path class="n" d="M4 14c1-6 6-8 10-5M16 13c1 6-5 8-9 6"/><path fill="#f01414" d="m12 9 5-5-3-1h8v8l-3-2-4 4z"/></svg></button>
   <button class="tb" aria-label="Axes"><svg viewBox="0 0 24 24"><path d="M12 13V4" stroke="#1b8fd0" stroke-width="1.500"/><path d="m12 1 3 5H9z" fill="#1b8fd0"/><path d="m12 13 7-5" stroke="#289848"/><path d="m24 6-4 5-2-4z" fill="#289848"/><path d="m12 13 7 5" stroke="#f01414"/><path d="m23 21-5 0 2-4z" fill="#f01414"/><path d="m12 13-8-5" stroke="#f01414" stroke-dasharray="2 1"/><path d="m12 13-7 5" stroke="#289848" stroke-dasharray="2 1"/><path d="M12 13v9" stroke="#1b8fd0" stroke-dasharray="2 1"/><circle class="nd" cx="12" cy="13" r="2.500"/></svg></button>
   <button class="tb" aria-label="Flip tool"><svg viewBox="0 0 24 24"><path d="M10 3v16H2z" class="n"/><path d="M14 3v16h8z" class="bf"/><path d="M12 1v20" stroke="#f01414" stroke-width="2" stroke-dasharray="3 1" opacity=".6"/></svg></button>
  </div>
  <i class="hsep"></i>
  <div class="grid">
   <button class="tb" aria-label="Tape measure"><svg viewBox="0 0 24 24"><path class="nf" d="m5 8 8-5 7 5-1 9-9 3-6-4z" stroke-width="1.500"/><circle class="rd" cx="12" cy="10" r="3"/><path class="n" d="m10 18-7 1v4"/></svg></button>
   <button class="tb" aria-label="Dimension"><svg viewBox="0 0 24 24"><path class="n" d="m3 13 9-9M1 10l8 7M8 1l8 7M5 13 2 16"/><path class="n" d="m5 4 3 3 2-3"/><circle class="rd" cx="19" cy="13" r="2.700"/><circle class="rd" cx="11" cy="20" r="2.700"/></svg></button>
   <button class="tb" aria-label="Protractor"><svg viewBox="0 0 24 24"><path class="n" d="M4 21C-2 9 12-1 21 5z" stroke-width="1.500"/><path class="n" d="M7 16c-1-5 4-9 9-8z"/><path class="n" d="M4 19C0 10 10 2 19 5" stroke-width="3" stroke-dasharray="1 2"/></svg></button>
   <button class="tb" aria-label="Text"><svg viewBox="0 0 24 24"><path class="nf" d="M7 1h16v14H7z"/><path class="n" d="M7 8H3v12" stroke-width="1.500"/><path d="m3 23-3-5h6z" fill="#12416b"/><text class="a1" x="10" y="12">A1</text></svg></button>
   <button class="tb" aria-label="Section plane"><svg viewBox="0 0 24 24"><circle class="nf" cx="12" cy="12" r="8.500"/><path class="n" d="M1 12h22M12 2v4M12 19v4"/><path d="m17 5 6 7-6 7z" fill="#12416b"/><path class="n" d="M10 8h4M8 16h7"/></svg></button>
   <button class="tb" aria-label="3D text"><svg viewBox="0 0 24 24"><text class="a3d" x="4" y="20">A</text></svg></button>
  </div>
  <i class="hsep"></i>
  <div class="grid">
   <button class="tb" aria-label="Orbit"><svg viewBox="0 0 24 24"><path class="r" d="M10 8c-10 0-10 7-3 8M14 8c10 0 10 6 3 8" stroke-width="3"/><path d="m6 12 6 4-6 4zM19 12l-6 4 6 4z" fill="#f01414"/><path class="n" d="M12 2v20"/></svg></button>
   <button class="tb" aria-label="Pan"><svg viewBox="0 0 24 24"><path fill="#f01414" d="m2 5 5-4v3h10V1l5 4-5 4V6H7v3z"/><path class="nf" d="M9 18V7h3v6l7 2v5l-3 3h-5l-5-7 2-1z" stroke="#3d7fb0"/></svg></button>
   <button class="tb" aria-label="Zoom"><svg viewBox="0 0 24 24"><circle class="n" cx="15" cy="9" r="6.500" stroke-width="1.500"/><path d="m3 22 7-8" stroke="#12416b" stroke-width="3"/></svg></button>
   <button class="tb" aria-label="Zoom window"><svg viewBox="0 0 24 24"><path class="b" d="M2 2h20v20H2z" stroke-width="1.500" stroke-dasharray="1 1.500"/><circle class="nf" cx="15" cy="9" r="5.500"/><path d="m4 21 7-8" stroke="#12416b" stroke-width="3"/></svg></button>
   <button class="tb" aria-label="Zoom extents"><svg viewBox="0 0 24 24"><circle class="n" cx="12" cy="11" r="4.500" stroke-width="1.500"/><path d="m2 22 7-8" stroke="#12416b" stroke-width="2.500"/><path d="M1 1h7L6 3l3 4-2 1-4-3-2 2zM23 1v6l-2-2-4 3-1-1 3-4-2-2zM23 22v-6l-2 2-4-3-1 2 3 3-2 2z" fill="#f01414"/></svg></button>
   <button class="tb on" aria-label="Previous view"><svg viewBox="0 0 24 24"><path class="n" d="M11 15H3V5h4l2-2h5l1 2h4v3"/><path d="M13 18h5c5 0 6-8 0-8h-6" fill="none" stroke="#f01414" stroke-width="1.500"/><path d="m9 10 6-3v6z" fill="#f01414"/></svg></button>
  </div>
  <i class="hsep"></i>
  <div class="grid">
   <button class="tb" aria-label="Position camera"><svg viewBox="0 0 24 24"><path d="M6 21h12v3H6z" fill="#ddd"/><path class="nf" d="M6 4h3l1-2h4l1 2h3v9H6z"/><path class="n" d="m8 13-2 9M12 13v6M16 13l2 9M7 17h10"/><circle class="rd" cx="12" cy="8" r="2.500"/></svg></button>
   <button class="tb" aria-label="Walk"><svg viewBox="0 0 24 24"><circle class="nd" cx="12" cy="3" r="2.200"/><path d="M12 5v8l5 9M12 13l-6 9M13 7l4 6" stroke="#12416b" stroke-width="2" fill="none"/><path d="M6 5h4v8H6z" fill="#f02020"/><path d="M19 8v14" stroke="#48a6d8"/></svg></button>
   <button class="tb" aria-label="Look around"><svg viewBox="0 0 24 24"><path d="M1 6c8 4 16-4 22 4l-3 2C14 7 8 9 2 12l3-3z" fill="#12416b"/><path class="n" d="M3 13c5 8 14 8 19 0"/><circle cx="14" cy="13" r="5.500" fill="#1598d8" stroke="#12416b"/><circle cx="14" cy="13" r="2" fill="#fff"/></svg></button>
   <button class="tb" aria-label="Field of view"><svg viewBox="0 0 24 24"><path class="n" d="M20 1 1 12l19 10M14 5c3 5 3 10 0 14"/><path d="M14 5c3 5 3 10 0 14l-4-2V7z" fill="#fff" stroke="#12416b"/><path class="b" d="M19 4c3 5 3 11 0 16" stroke-width="1.500"/></svg></button>
  </div>
  <i class="hsep"></i>
  <div class="grid">
   <button class="tb" aria-label="Warehouse"><svg viewBox="0 0 24 24"><g fill="none" stroke="#165d92" stroke-width="1.500"><path d="M12 22 2 17V6l10-4 10 4v6M14 18l-8-3V8l6-2 6 2v5"/><path d="m9 10 3-1 3 1v4l-3 1-3-1z"/></g><path class="wf" d="M17 13h5v6h3l-5 5-6-5h3z"/></svg></button>
   <button class="tb" aria-label="Extensions warehouse"><svg viewBox="0 0 24 24"><g fill="none" stroke="#165d92" stroke-width="2"><path d="M1 3c8 9 14 0 22 3M1 8c8 9 14 0 22 3M1 14c6 4 9 0 13-2M2 21c7-1 7-8 20-5M5 2c5 5 12 0 18-1"/></g><circle class="wf" cx="18" cy="18" r="5.500"/><path class="n" d="M15 17c1-3 5-3 6 0M21 20c-1 2-5 2-6 0"/></svg></button>
   <button class="tb" aria-label="Send layers"><svg viewBox="0 0 24 24"><g fill="none" stroke="#165d92" stroke-width="1.500"><path d="m2 6 10-4 10 4-10 5zM2 10l10 5 9-4M2 14l10 5M2 18l10 5"/></g><path class="wf" d="M14 16h5v-3l5 5-5 5v-3h-5z"/></svg></button>
   <button class="tb" aria-label="Extension manager"><svg viewBox="0 0 24 24"><g fill="none" stroke="#165d92" stroke-width="2"><path d="M1 3c8 9 14 0 22 3M1 8c8 9 14 0 22 3M1 14c6 4 9 0 13-2M2 21c7-1 7-8 20-5M5 2c5 5 12 0 18-1"/></g><circle cx="18" cy="18" r="5" fill="#fff" stroke="#165d92" stroke-width="2" stroke-dasharray="3 1"/><circle class="n" cx="18" cy="18" r="2"/></svg></button>
  </div>
 </div>
</aside>

<main class="main">
 <div class="tabs">
  <button class="find" aria-label="Search scenes"><svg viewBox="0 0 18 18"><circle cx="11" cy="6" r="4.500" fill="none" stroke="#000" stroke-width="2"/><path d="m8 10-6 7" stroke="#000" stroke-width="2.500"/></svg></button>
  <button class="tab">FILE</button><button class="tab">3D CÓ KÍCH THƯỚC</button><button class="tab">3D KO KÍCH THƯỚC</button><button class="tab">KỆ TIVI</button><button class="tab">KỆ TIVI MỞ CÁNH</button><button class="tab">MẶT SAU KỆ TIVI</button><button class="tab">MẶT SAU TỦ RƯỢU</button><button class="tab">MẶT TRƯỚC KÍCH THƯỚC&nbsp; TỦ RƯỢU</button><button class="tab">VACH TỦ RƯỢU TÊN GỌI TRƯỚC</button><button class="tab">VÁCH TIVI</button><button class="tab active">VÁCH TIVI MẶT SAU</button>
 </div>
 <div class="viewport">
  <svg class="scene" width="1751" height="809" viewBox="69 149 1751 809">
   <defs>
    <filter id="grain" x="0" y="0" width="100%" height="100%"><feTurbulence type="fractalNoise" baseFrequency=".007 .14" numOctaves="4" seed="8"/><feColorMatrix values="0 0 0 0 .32  0 0 0 0 .1  0 0 0 0 .08  1.800 0 0 0 -.7"/></filter>
    <filter id="glow" x="0" y="0" width="100%" height="100%"><feTurbulence type="fractalNoise" baseFrequency=".009 .12" numOctaves="3" seed="31"/><feColorMatrix values="0 0 0 0 .62  0 0 0 0 .34  0 0 0 0 .2  1.600 0 0 0 -.75"/></filter>
    <clipPath id="wood"><path d="m752 354 11 11 393-58-2 45 11 8-22 319-340 91-17-29z"/></clipPath>
    <marker id="tip" viewBox="0 0 12 8" refX="11" refY="4" markerWidth="12" markerHeight="8" markerUnits="userSpaceOnUse" orient="auto"><path d="M0 0 12 4 0 8z" fill="#ff2d3c"/></marker>
   </defs>
   <path d="m763 365 393-58-2 45-388 64z" fill="#793425"/>
   <path d="m774 425 391-66-22 320-340 91z" fill="#793526"/>
   <path d="m752 354 11 11 3 51 8 9 10 125 19 220-17-29z" fill="#5e291d"/>
   <path d="m766 416 388-64 11 7-391 66z" fill="#5c281c"/>
   <g clip-path="url(#wood)"><g transform="rotate(-11 950 540)"><rect x="680" y="260" width="560" height="580" filter="url(#grain)" opacity=".2"/><rect x="680" y="260" width="560" height="580" filter="url(#glow)" opacity=".15"/></g></g>
   <g fill="none" stroke="#0d0504">
    <path d="m752 354 11 11 393-58-2 45 11 7-22 320-340 91-17-29z"/>
    <path d="m752 354 11 11 393-58" stroke-width="2"/>
    <path d="m763 365 3 51 8 9 10 125 19 220M766 416l388-64M774 425l391-66M775 427l390-66M892 346l1 49 10 9M913 404l4 120 5 214M1047 382l-4 117-4 208M768 527l16 23 133-26 126-25 114-24"/>
    <path d="m774 425 10 125 19 220" stroke-width="2" stroke-dasharray="3 1"/>
   </g>
   <g class="leader">
    <path d="M708 293h21l89 122"/><path d="M1133 277h-21l-46 95"/><path d="M1222 437h-19l-76-9"/><path d="M1233 506h-20l-243-51"/><path d="M1255 655h-20l-147-8"/><path d="M1092 757h-21l-82-106"/><path d="M993 863h-20L832 708"/><path d="M648 510h21l153 6"/>
   </g>
   <g class="dims">
    <path d="m750 354-32 5 20 198M741 582l16 166M785 741l-40 10M799 771l-38 10M1155 352l30-5M1166 360l32-6"/>
    <g class="dot"><circle cx="718" cy="359" r="3.500"/><circle cx="757" cy="748" r="3.500"/><ellipse cx="745" cy="751" rx="4" ry="2.500"/><ellipse cx="761" cy="781" rx="4" ry="2.500"/><path d="m1174 348 10-2v3z"/></g>
   </g>
   <g class="note">
    <text x="395" y="301">__110. MẶT ĐÁY_HỘP BÊ TÔNG</text>
    <text x="1144" y="286">__164. MẶT ĐÁY_HỘP BÊ TÔNG</text>
    <text x="1233" y="445">__143. TẤM NỀN TRÊN TRÁI_PHẢI VÁCH TIVI</text>
    <text x="1245" y="514">__26. NAN TRÊN VÁCH TIVI</text>
    <text x="1266" y="663">__142. TẤM NỀN DƯỚI TRÁI_PHẢI VÁCH TIVI</text>
    <text x="1103" y="765">__58. TẤM NỀN DƯỚI VÁCH TIVI</text>
    <text x="1005" y="872">__145. TẤM NỀN DƯỚI TRÁI_PHẢI VÁCH TIVI</text>
    <text x="205" y="519">__144. TẤM NỀN TRÊN TRÁI_PHẢI VÁCH TIVI</text>
   </g>
   <g class="dimtext"><text x="710" y="576">3257,0</text><text x="729" y="773">420,0</text><text x="1161" y="358">173,0</text></g>
  </svg>
  <p class="headline">Nhận thiết kế A -Z mọi lĩnh vực<br>0792 bốn ko ba 279.</p>

  <section class="float p1"><header><span>...</span><button aria-label="Close">×</button></header><div class="icons"><button class="tb" aria-label="Solid"><svg viewBox="0 0 24 24"><path d="M1 8 14 1l9 22H1z" fill="#b5b5ba" stroke="#919196" stroke-width="1.500"/></svg></button></div></section>
  <section class="float p2"><header><span>...</span><button aria-label="Close">×</button></header><div class="icons"><button class="tb" aria-label="Circle tool"><svg viewBox="0 0 24 24"><circle class="n" cx="10" cy="12" r="8" stroke-width="1.500"/><path d="m2 0 5 2-5 4zM2 20l5 2-5 3z" fill="#12416b"/></svg></button></div></section>
  <section class="float p3"><header><span>Keyframe Animation</span></header><div class="icons">
   <button class="tb" aria-label="Play animation"><svg viewBox="0 0 24 24"><path d="m2 0 20 12L2 24z" fill="#2b6cdc" stroke="#2458b8"/></svg></button>
   <button class="tb" aria-label="Record"><svg viewBox="0 0 24 24"><circle cx="12" cy="12" r="10.500" fill="#f4f4f4" stroke="#555" stroke-width="2.500"/><circle cx="12" cy="12" r="5" fill="#e01010"/></svg></button>
   <button class="tb" aria-label="Select keyframes"><svg viewBox="0 0 24 24"><path d="M2 2h20v20H2z" fill="none" stroke="#3f51b5" stroke-width="1.500" stroke-dasharray="4 3"/><path d="M0 0h4v4H0zM20 0h4v4h-4zM0 20h4v4H0zM20 20h4v4h-4z" fill="#3f51b5"/></svg></button>
   <button class="tb" aria-label="Cancel"><svg viewBox="0 0 24 24"><circle cx="12" cy="12" r="10" fill="#8e8e8e" stroke="#aaa" stroke-width="2"/><path d="m8 8 8 8M16 8l-8 8" stroke="#fff" stroke-width="3"/></svg></button>
   <button class="tb" aria-label="Timing"><svg viewBox="0 0 24 24"><circle cx="11" cy="14" r="8.500" fill="none" stroke="#3f51b5" stroke-width="3"/><path d="M7 0h8v3H7z" fill="#3f51b5"/><path d="m17 4 5 4M11 14l4-4" stroke="#3f51b5" stroke-width="3"/></svg></button>
   <button class="tb" aria-label="Film"><svg viewBox="0 0 24 24"><path d="M0 1 24 2v21L0 22z" fill="#222"/><path d="M0 5h24v14H0z" fill="#1788cc"/><path d="M0 5h9v14H0z" fill="#1565a5"/><path d="M15 5v14" stroke="#7cd" stroke-width="2"/><path d="M0 3h24M0 21h24" stroke="#fff" stroke-width="2" stroke-dasharray="2 1"/></svg></button>
   <button class="tb" aria-label="More"><svg viewBox="0 0 24 24"><circle cx="12" cy="12" r="11" fill="#eee" stroke="#888"/></svg></button>
  </div></section>
  <section class="float p4"><header><span>...</span><button aria-label="Close">×</button></header><div class="icons"><button class="tb" aria-label="Texture"><svg viewBox="0 0 24 24"><rect x="1" y="1" width="12" height="17" rx="1" fill="#f4e4e6" stroke="#e66" stroke-width="1.500"/><path d="m5 8 10-1 5 5v12h-8z" fill="#111"/><path d="m8 9 9 1 2 3-9-2z" fill="#fd9"/><path d="M11 13h8v11h-6z" fill="#a86"/><circle cx="9" cy="6" r="1.500" fill="red"/><circle cx="5" cy="10" r="1.500" fill="red"/></svg></button></div></section>
 </div>
</main>
</div>
</div>
</body>
</html>
```
FILE: styles.css
```css
* { box-sizing: border-box; }
body { margin: 0; font-family: "Open Sans", "Noto Sans", sans-serif; font-size: 12px; color: #222; background: #f0f0f5; overflow: hidden; }
button { font: inherit; color: inherit; background: none; border: 0; padding: 0; margin: 0; }
.app { display: flex; flex-direction: column; height: 100vh; }

.titlebar { display: flex; align-items: center; height: 23px; padding: 0 10px 0 2px; background: #fff; flex: none; }
.logo { width: 16px; height: 16px; }
.title { margin: 0 0 0 5px; font: 11px "Noto Sans", sans-serif; color: #000; flex: 1; }
.minimize { width: 11px; height: 12px; border-bottom: 1px solid #000; align-self: flex-start; }

.menubar { display: flex; gap: 14px; height: 23px; padding: 0 10px; align-items: center; border-bottom: 2px solid #dedee8; flex: none; }

.toolrow { display: flex; height: 36px; flex: none; overflow: hidden; padding-left: 1px; border-bottom: 2px solid #dedee8; }
.second { padding-left: 39px; border-bottom-color: #c6c6ce; }
.bar { display: flex; align-items: center; flex: none; border-left: 2px solid #dedee8; padding-right: 2px; }
.first { border-left-color: #e6e6ee; }
.grip { width: 10px; height: 18px; flex: none; background: radial-gradient(circle at 1px 1px, #aaa 1px, transparent 1px) 3px 0 / 3px 3px; border-right: 3px solid #f0f0f5; border-left: 2px solid #f0f0f5; }
.sep { width: 6px; height: 20px; flex: none; border: solid #f0f0f5; border-width: 0 2px; background: #999; }
.tb { display: flex; align-items: center; justify-content: center; width: 32px; height: 32px; flex: none; }
.tb svg { width: 24px; height: 24px; overflow: hidden; flex: none; }
.tb svg.big { width: 28px; height: 28px; overflow: visible; }
.tb svg.wide { width: 30px; }
.tb svg.abf { width: 32px; height: 32px; }
.abf text { font: bold 12px "Liberation Sans", sans-serif; fill: #f01414; }
.word { font: 18px "Roboto", sans-serif; color: #111; }
.dxf { font: bold 13px "Open Sans", sans-serif; }

.k { fill: none; stroke: #111; }
.kw { fill: #fff; stroke: #222; }
.kg { fill: #bbb; stroke: #222; }
.r { fill: none; stroke: #f01414; }
.g { fill: none; stroke: #999; }
.n { fill: none; stroke: #12416b; }
.nf { fill: #e3f1fb; stroke: #12416b; }
.wf { fill: #fff; stroke: #165d92; }
.f { fill: #e3f1fb; }
.b { fill: none; stroke: #1b90cf; }
.bf { fill: #d9ecf9; stroke: #1b90cf; }
.c { fill: none; }
.cb { fill: #f4f4f4; stroke: #666; }
.rd { fill: #f41414; }
.nd { fill: #12416b; }
.ly path { fill: #fff; stroke: #111; }
.a1 { font: bold 8px "Liberation Serif", serif; fill: #12416b; }
.a3d { font: italic bold 20px "Liberation Sans", sans-serif; fill: #a9d9f4; stroke: #1b90cf; }

.tagbox { position: relative; width: 166px; height: 22px; }
.tagbox select { appearance: none; width: 100%; height: 22px; padding: 0 24px; font: 12px "Open Sans", sans-serif; color: #222; background: #fff; border: 1px solid #aaa; border-radius: 3px; display: block; }
.check { position: absolute; left: 7px; top: 5px; width: 12px; height: 12px; }
.caret { position: absolute; right: 7px; top: 9px; width: 8px; height: 5px; }

.work { display: flex; flex: 1; min-height: 0; }
.side { width: 69px; flex: none; }
.palette { border: solid #dedee8; border-width: 0 1px 1px; padding: 0 1px 1px; }
.hgrip { display: block; height: 10px; width: 18px; margin: 0 auto; background: radial-gradient(circle at 1px 1px, #bbb 1px, transparent 1px) 0 0 / 3px 3px; border: solid #f0f0f5; border-width: 2px 0; }
.grid { display: grid; grid-template-columns: 32px 32px; grid-auto-rows: 32px; }
.hsep { display: block; height: 6px; margin: 0 8px 0 6px; border: solid #f0f0f5; border-width: 2px 0; background: #999; }
.on { background: #dcecf8; border: 1px solid #3a7fb0; border-radius: 4px; height: 31px; }

.main { flex: 1; min-width: 0; display: flex; flex-direction: column; }
.tabs { display: flex; align-items: flex-end; height: 31px; flex: none; border-left: 2px solid #111; padding-bottom: 2px; }
.find { width: 62px; height: 26px; }
.find svg { width: 18px; height: 18px; }
.tab { height: 25px; padding: 0 12px 0 11px; color: #555; background: #dfdfe4; border: 1px solid #b8b8be; border-width: 1px 0 0 1px; white-space: nowrap; border-radius: 2px 2px 0 0; flex: none; }
.active { height: 27px; background: #f8f8fc; border: 1px solid #a8a8b0; border-bottom: 0; }

.viewport { position: relative; flex: 1; background: #fff; overflow: hidden; }
.scene { display: block; position: absolute; left: 0; top: 0; }
.leader path { fill: none; stroke: #ff2d3c; marker-end: url(#tip); }
.dims path { fill: none; stroke: #ff2d3c; }
.dims .dot * { fill: #ff2038; }
.note text { font: 22px "DejaVu Sans Condensed", "DejaVu Sans", sans-serif; fill: #ff2436; }
.dimtext text { font: 16px "DejaVu Sans", sans-serif; fill: #ff2436; }
.headline { position: absolute; left: 14px; top: 20px; margin: 0; font: bold 21px/25px "Noto Sans", sans-serif; color: #ff4055; white-space: nowrap; }

.float { position: absolute; width: 37px; height: 59px; background: #f0f0f5; border: 1px solid #dcdce6; padding: 2px 1px; }
.float header { display: flex; align-items: center; justify-content: space-between; height: 20px; padding: 0 4px; background: #9cb4d0; border: 1px solid #b0b0b6; font: bold 12px "Open Sans", sans-serif; color: #444; }
.float header button { font-size: 14px; line-height: 14px; font-weight: 400; }
.float .icons { display: flex; padding-top: 2px; }
.p1 { left: 1345px; top: 75px; }
.p2 { left: 1526px; top: 104px; }
.p3 { left: 1549px; top: 142px; width: 240px; }
.p4 { left: 1479px; top: 760px; }
```
